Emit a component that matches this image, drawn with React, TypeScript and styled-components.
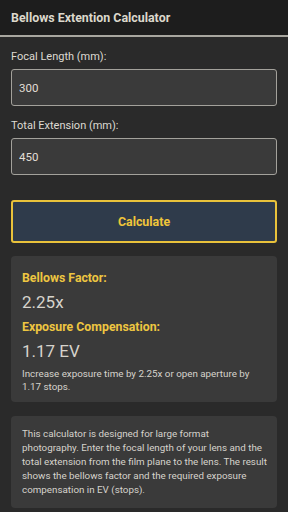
import React, { useState } from "react";
import styled, { createGlobalStyle } from "styled-components";

const Global = createGlobalStyle`
  html, body { margin: 0; padding: 0; background: #2a2a2a; }
  body { font-family: Roboto, "Noto Sans", sans-serif; color: #dedad2; }
  * { box-sizing: border-box; }
`;

const Page = styled.div`
  width: 288px;
  min-height: 512px;
  background: #2a2a2a;
  display: flex;
  flex-direction: column;
`;

const Header = styled.header`
  height: 37px;
  background: #1d1d1d;
  border-bottom: 2px solid #a8a69f;
  display: flex;
  align-items: center;
  padding: 0 11px;
  font-weight: 700;
  font-size: 12.4px;
  color: #dcd8cc;
`;

const Main = styled.main`
  padding: 12px 11px 0;
  display: flex;
  flex-direction: column;
`;

const Field = styled.div`
  display: flex;
  flex-direction: column;
  gap: 4px;
  margin-bottom: 12px;
`;

const Label = styled.label`
  font-size: 11px;
  line-height: 16px;
  color: #dedad2;
`;

const Input = styled.input`
  height: 37px;
  width: 100%;
  background: #3a3a3a;
  border: 1px solid #a3a19b;
  border-radius: 3px;
  padding: 0 7px;
  font-family: Roboto, sans-serif;
  font-size: 11.5px;
  color: #e2ded6;
  outline: none;
`;

const Button = styled.button`
  margin-top: 13px;
  height: 43px;
  width: 100%;
  background: #2f3b4b;
  border: 2px solid #e9c23b;
  border-radius: 3px;
  color: #efc53a;
  font-family: Roboto, sans-serif;
  font-weight: 700;
  font-size: 12.4px;
  cursor: pointer;
`;

const Card = styled.section<{ $mt: number; $pad: string }>`
  margin-top: ${(p) => p.$mt}px;
  background: #3a3a3a;
  border-radius: 4px;
  padding: ${(p) => p.$pad};
`;

const ResultTitle = styled.div`
  color: #eec641;
  font-weight: 700;
  font-size: 12.3px;
  line-height: 18px;
`;

const ResultValue = styled.div`
  font-size: 17px;
  line-height: 22px;
  color: #d6d3cc;
  margin: 4px 0 5px;
`;

const Note = styled.p`
  margin: 3px 0 0;
  font-size: 9.8px;
  line-height: 13px;
  color: #d6d3cc;
`;

const Info = styled.p`
  margin: 0;
  font-size: 9.8px;
  line-height: 14px;
  white-space: nowrap;
  color: #d6d3cc;
`;

export default function App() {
  const [focal, setFocal] = useState("300");
  const [ext, setExt] = useState("450");
  return (
    <Page>
      <Global />
      <Header>Bellows Extention Calculator</Header>
      <Main>
        <Field>
          <Label>Focal Length (mm):</Label>
          <Input value={focal} onChange={(e) => setFocal(e.target.value)} />
        </Field>
        <Field>
          <Label>Total Extension (mm):</Label>
          <Input value={ext} onChange={(e) => setExt(e.target.value)} />
        </Field>
        <Button>Calculate</Button>
        <Card $mt={13} $pad="13px 11px 9px">
          <ResultTitle>Bellows Factor:</ResultTitle>
          <ResultValue>2.25x</ResultValue>
          <ResultTitle>Exposure Compensation:</ResultTitle>
          <ResultValue>1.17 EV</ResultValue>
          <Note>Increase exposure time by 2.25x or open aperture by 1.17 stops.</Note>
        </Card>
        <Card $mt={14} $pad="11px 11px">
          <Info>
            This calculator is designed for large format
            <br />
            photography. Enter the focal length of your lens and the
            <br />
            total extension from the film plane to the lens. The result
            <br />
            shows the bellows factor and the required exposure
            <br />
            compensation in EV (stops).
          </Info>
        </Card>
      </Main>
    </Page>
  );
}
